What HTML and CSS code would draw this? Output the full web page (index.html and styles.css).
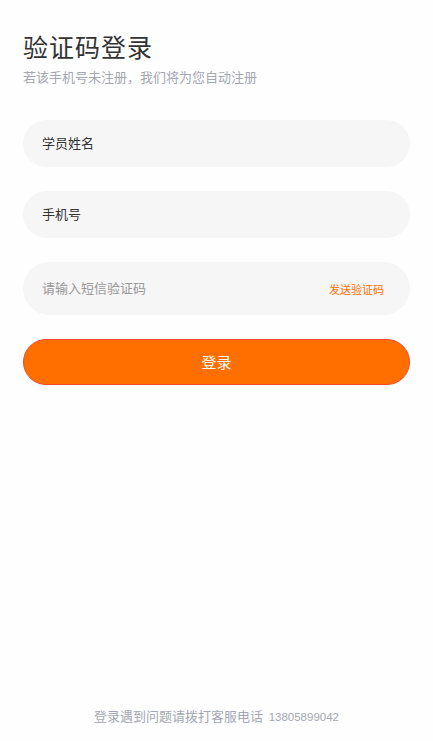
FILE: index.html
```html
<!DOCTYPE html>
<html lang="zh-CN">
<head>
    <meta charset="UTF-8">
    <meta name="viewport" content="width=device-width, initial-scale=1.0">
    <title>验证码登录</title>
    <link rel="stylesheet" href="styles.css">
</head>
<body>
    <div class="page">
        <div class="header">
            <h2>验证码登录</h2>
            <p class="tip">若该手机号未注册，我们将为您自动注册</p>
        </div>
        <form class="login-form" action="#" method="post">
            <div class="field">
                <input type="text" name="name" placeholder="学员姓名" class="dark">
            </div>
            <div class="field">
                <input type="tel" name="phone" placeholder="手机号" class="dark">
            </div>
            <div class="field field-code">
                <input type="text" name="code" placeholder="请输入短信验证码">
                <span class="send-code">发送验证码</span>
            </div>
            <button type="submit" class="btn-login">登录</button>
        </form>
        <div class="footer">登录遇到问题请拨打客服电话 <span class="phone">13805899042</span></div>
    </div>
</body>
</html>
```

FILE: styles.css
```css
* {
    box-sizing: border-box;
}

body, h2, p {
    margin: 0;
    padding: 0;
}

body {
    font-family: "Liberation Sans", "Noto Sans CJK SC", sans-serif;
    background-color: #fefefe;
    color: #333;
}

.page {
    height: 100vh;
    display: flex;
    flex-direction: column;
    padding: 33px 23px 16px;
}

.header h2 {
    font-family: "Liberation Serif", "Noto Sans CJK SC", serif;
    font-size: 25px;
    font-weight: normal;
    line-height: 32px;
    color: #333;
    letter-spacing: 1px;
}

.header .tip {
    margin-top: 4px;
    font-size: 13px;
    line-height: 18px;
    color: #a4a7b2;
}

.login-form {
    margin-top: 33px;
    display: flex;
    flex-direction: column;
}

.field {
    height: 47px;
    background-color: #f6f6f7;
    border-radius: 24px;
    display: flex;
    align-items: center;
    padding: 0 26px 0 17px;
    margin-bottom: 24px;
}

.field input {
    flex: 1;
    min-width: 0;
    border: none;
    outline: none;
    background: transparent;
    font-family: inherit;
    font-size: 13px;
    color: #333;
}

.field input::placeholder {
    color: #999;
}

.field input.dark::placeholder {
    color: #333;
}

.field-code {
    height: 53px;
    border-radius: 27px;
}

.send-code {
    font-size: 11px;
    color: #ff6f00;
}

.btn-login {
    height: 46px;
    padding-bottom: 3px;
    border: 1px solid #f04a2a;
    border-radius: 23px;
    background-color: #ff6f00;
    color: #fff;
    font-family: inherit;
    font-size: 15px;
    cursor: pointer;
}

.footer {
    margin-top: auto;
    text-align: center;
    font-size: 13px;
    color: #a4a7b2;
}

.footer .phone {
    font-size: 11.5px;
    margin-left: 2px;
}
```
